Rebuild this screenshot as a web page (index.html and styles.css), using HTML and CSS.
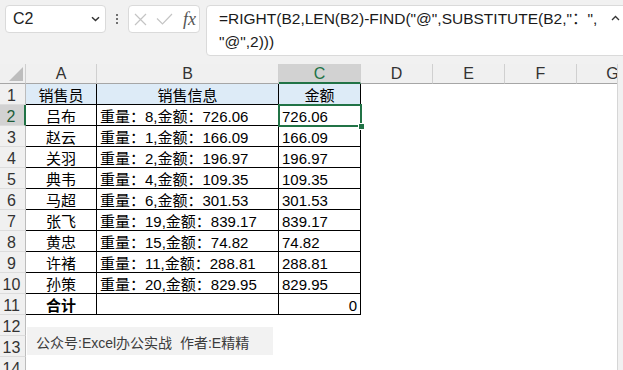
FILE: index.html
```html
<!DOCTYPE html>
<html lang="zh-CN">
<head>
    <meta charset="UTF-8">
    <meta name="viewport" content="width=device-width, initial-scale=1.0">
    <title>销售信息</title>
    <link rel="stylesheet" href="styles.css">
</head>
<body>
    <div class="bar">
        <div class="name-box">
            <span>C2</span>
            <svg width="9" height="6" viewBox="0 0 9 6"><path d="M1 1.2l3.5 3.3L8 1.2" fill="none" stroke="#333" stroke-width="1.5"/></svg>
        </div>
        <div class="dots"><i></i><i></i><i></i></div>
        <div class="fx-box">
            <svg width="13" height="13" viewBox="0 0 13 13"><path d="M1 1l11 11M12 1L1 12" stroke="#c4c4c4" stroke-width="1.2"/></svg>
            <svg width="17" height="12" viewBox="0 0 17 12"><path d="M1 5.5l5.5 5.5L16 1" fill="none" stroke="#c4c4c4" stroke-width="1.2"/></svg>
            <span class="fx">fx</span>
        </div>
        <div class="formula">
            <div class="formula-text">
                <div>=RIGHT(B2,LEN(B2)-FIND("@",SUBSTITUTE(B2,"：",</div>
                <div>"@",2)))</div>
            </div>
            <svg class="caret" width="9" height="6" viewBox="0 0 9 6"><path d="M1 5l3.5-3.5L8 5" fill="none" stroke="#333" stroke-width="1.3"/></svg>
        </div>
    </div>

    <div class="sheet">
        <div class="row head">
            <div class="corner"><i></i></div>
            <div class="ch">A</div>
            <div class="ch">B</div>
            <div class="ch sel">C</div>
            <div class="ch">D</div>
            <div class="ch">E</div>
            <div class="ch">F</div>
            <div class="ch">G</div>
        </div>
        <div class="row">
            <div class="rh">1</div>
            <div class="cell hd c">销售员</div>
            <div class="cell hd c">销售信息</div>
            <div class="cell hd c">金额</div>
        </div>
        <div class="row">
            <div class="rh sel">2</div>
            <div class="cell c">吕布</div>
            <div class="cell">重量：8,金额：726.06</div>
            <div class="cell sel">726.06</div>
        </div>
        <div class="row">
            <div class="rh">3</div>
            <div class="cell c">赵云</div>
            <div class="cell">重量：1,金额：166.09</div>
            <div class="cell">166.09</div>
        </div>
        <div class="row">
            <div class="rh">4</div>
            <div class="cell c">关羽</div>
            <div class="cell">重量：2,金额：196.97</div>
            <div class="cell">196.97</div>
        </div>
        <div class="row">
            <div class="rh">5</div>
            <div class="cell c">典韦</div>
            <div class="cell">重量：4,金额：109.35</div>
            <div class="cell">109.35</div>
        </div>
        <div class="row">
            <div class="rh">6</div>
            <div class="cell c">马超</div>
            <div class="cell">重量：6,金额：301.53</div>
            <div class="cell">301.53</div>
        </div>
        <div class="row">
            <div class="rh">7</div>
            <div class="cell c">张飞</div>
            <div class="cell">重量：19,金额：839.17</div>
            <div class="cell">839.17</div>
        </div>
        <div class="row">
            <div class="rh">8</div>
            <div class="cell c">黄忠</div>
            <div class="cell">重量：15,金额：74.82</div>
            <div class="cell">74.82</div>
        </div>
        <div class="row">
            <div class="rh">9</div>
            <div class="cell c">许褚</div>
            <div class="cell">重量：11,金额：288.81</div>
            <div class="cell">288.81</div>
        </div>
        <div class="row">
            <div class="rh">10</div>
            <div class="cell c">孙策</div>
            <div class="cell">重量：20,金额：829.95</div>
            <div class="cell">829.95</div>
        </div>
        <div class="row">
            <div class="rh">11</div>
            <div class="cell c total">合计</div>
            <div class="cell"></div>
            <div class="cell n">0</div>
        </div>
        <div class="row"><div class="rh">12</div></div>
        <div class="row"><div class="rh">13</div></div>
        <div class="row"><div class="rh">14</div></div>

        <div class="note">公众号:Excel办公实战  作者:E精精</div>
    </div>
</body>
</html>
```

FILE: styles.css
```css
body {
    margin: 0;
    width: 623px;
    height: 370px;
    overflow: hidden;
    background-color: #f1f1f1;
    font-family: "Liberation Sans", "Noto Sans CJK SC", sans-serif;
    color: #000;
}

/* formula bar */
.bar {
    height: 64px;
    box-sizing: border-box;
    padding: 5px 0 0 5px;
    display: flex;
    align-items: flex-start;
    overflow: hidden;
}
.bar > * {
    flex-shrink: 0;
}
.name-box {
    width: 101px;
    height: 28px;
    box-sizing: border-box;
    background: white;
    border: 1px solid #dadada;
    border-radius: 4px;
    display: flex;
    align-items: center;
    justify-content: space-between;
    padding: 0 5px 0 7px;
    font-size: 16px;
    color: #222;
}
.dots {
    width: 22px;
    height: 28px;
    display: flex;
    flex-direction: column;
    align-items: center;
    justify-content: center;
    gap: 2px;
}
.dots i {
    width: 2px;
    height: 2px;
    border-radius: 1px;
    background: #444;
}
.fx-box {
    width: 72px;
    height: 28px;
    box-sizing: border-box;
    background: white;
    border: 1px solid #dadada;
    border-radius: 4px;
    display: flex;
    align-items: center;
    gap: 9px;
    padding-left: 5px;
}
.fx {
    font-family: "Liberation Serif", serif;
    font-style: italic;
    font-size: 18px;
    color: #555;
    margin-left: 1px;
}
.formula {
    margin-left: 6px;
    width: 425px;
    height: 51px;
    box-sizing: border-box;
    background: white;
    border: 1px solid #dadada;
    border-radius: 4px;
    display: flex;
    padding: 1px 10px 0 12px;
}
.formula-text {
    flex: 1;
    font-size: 15.5px;
    line-height: 23px;
    white-space: nowrap;
    color: #1a1a1a;
}
.caret {
    margin-top: 8px;
}

/* sheet */
.sheet {
    position: relative;
    width: 618px;
    height: 306px;
    box-sizing: border-box;
    background: white;
    border-right: 1px solid #d6d6d6;
    overflow: hidden;
}
.row {
    display: grid;
    grid-template-columns: 26px 71px 182px 82px 72px 72px 72px 72px;
    height: 21px;
}
.row > div {
    box-sizing: border-box;
    white-space: nowrap;
}
.row.head {
    height: 20px;
    background: #f0f0f0;
}
.corner {
    border-right: 1px solid #cfcfcf;
    border-bottom: 1px solid #a6a6a6;
    display: flex;
    align-items: flex-end;
    justify-content: flex-end;
    padding: 0 2px 2px 0;
}
.corner i {
    width: 14px;
    height: 14px;
    background: #bdbdbd;
    clip-path: polygon(100% 0, 100% 100%, 0 100%);
}
.ch {
    border-right: 1px solid #d0d0d0;
    border-bottom: 1px solid #a6a6a6;
    text-align: center;
    font-size: 16px;
    line-height: 16px;
    padding-top: 2px;
    color: #333;
}
.ch.sel {
    background: #d2d2d2;
    border-bottom: 2px solid #217346;
    color: #217346;
}
.rh {
    background: #f0f0f0;
    border-right: 1px solid #bcbcbc;
    border-bottom: 1px solid #dcdcdc;
    text-align: center;
    padding: 4px 2px 0 0;
    font-size: 16px;
    line-height: 16px;
    color: #333;
}
.rh.sel {
    background: #d2d2d2;
    border-right: 2px solid #217346;
    color: #1f5c3a;
}
.cell {
    border-right: 1px solid #000;
    border-bottom: 1px solid #000;
    padding: 4px 3px 0;
    font-size: 15px;
    line-height: 16px;
}
.cell.hd {
    background: #ddebf7;
}
.cell.c {
    text-align: center;
}
.cell.n {
    text-align: right;
}
.cell.total {
    font-weight: bold;
}
.cell.sel {
    position: relative;
}
.cell.sel::after {
    content: "";
    position: absolute;
    top: -1px;
    left: -1px;
    right: -2px;
    bottom: -2px;
    border: 2px solid #217346;
}
.cell.sel::before {
    content: "";
    position: absolute;
    right: -4px;
    bottom: -4px;
    width: 5px;
    height: 5px;
    background: #217346;
    outline: 1px solid white;
    z-index: 1;
}

/* text box laid over the sheet */
.note {
    position: absolute;
    left: 27px;
    top: 263px;
    width: 246px;
    height: 28px;
    box-sizing: border-box;
    padding: 2px 0 0 9px;
    background: #f2f2f2;
    display: flex;
    align-items: center;
    white-space: pre;
    font-size: 14px;
    color: #3c3c3c;
}
```
